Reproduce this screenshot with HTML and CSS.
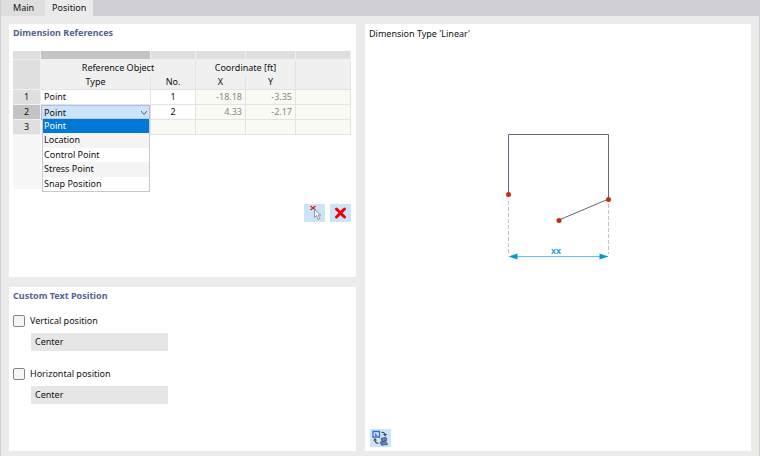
FILE: index.html
```html
<!DOCTYPE html>
<html lang="en">
<head>
<meta charset="utf-8">
<title>Dimension</title>
<link rel="stylesheet" href="styles.css">
</head>
<body>
<div class="window">
  <nav class="tabs" role="tablist">
    <button class="tab" role="tab" aria-selected="false">Main</button>
    <button class="tab tab-active" role="tab" aria-selected="true">Position</button>
  </nav>
  <main class="content">
    <div class="left">
      <section class="panel references">
        <h2 class="title">Dimension References</h2>
        <table class="grid">
          <colgroup><col class="c-row"><col class="c-type"><col class="c-no"><col class="c-xy"><col class="c-xy"><col class="c-rest"></colgroup>
          <thead>
            <tr class="strip"><td></td><td class="strip-active"></td><td></td><td></td><td></td><td></td></tr>
            <tr><th rowspan="2" class="rownum"></th><th colspan="2" class="group">Reference Object</th><th colspan="2" class="group">Coordinate [ft]</th><th class="group"></th></tr>
            <tr class="sub"><th>Type</th><th>No.</th><th>X</th><th>Y</th><th></th></tr>
          </thead>
          <tbody>
            <tr><th class="rownum">1</th><td class="type">Point</td><td class="no">1</td><td class="num">-18.18</td><td class="num">-3.35</td><td class="locked"></td></tr>
            <tr><th class="rownum rownum-active">2</th>
              <td class="editing">
                <div class="combo">
                  <select class="combo-field" aria-label="Type of reference object 2"><option>Point</option><option>Location</option><option>Control Point</option><option>Stress Point</option><option>Snap Position</option></select>
                  <svg class="chevron" viewBox="0 0 8 6"><path d="M1 1 4 4.500 7 1"/></svg>
                  <ul class="menu" role="listbox" aria-label="Type">
                    <li role="option" aria-selected="true" class="chosen">Point</li>
                    <li role="option">Location</li>
                    <li role="option">Control Point</li>
                    <li role="option">Stress Point</li>
                    <li role="option">Snap Position</li>
                  </ul>
                </div>
              </td>
              <td class="no">2</td><td class="num">4.33</td><td class="num">-2.17</td><td class="locked"></td></tr>
            <tr><th class="rownum">3</th><td class="locked"></td><td class="locked"></td><td class="locked"></td><td class="locked"></td><td class="locked"></td></tr>
            <tr class="filler"><td class="gutter"></td><td colspan="5"></td></tr>
          </tbody>
        </table>
        <div class="actions">
          <button class="tool" aria-label="Pick in view">
            <svg viewBox="0 0 21 18"><path d="M6.500 2l5 4M11.500 2l-5 4" stroke="#e3182d" stroke-width="1.300"/><path d="M10.500 5.500v8l2-2 1.500 4 1.800-.8-1.600-3.700h2.600z" fill="#fff" stroke="#858b92" stroke-width=".9"/></svg>
          </button>
          <button class="tool" aria-label="Delete">
            <svg viewBox="0 0 21 18"><path d="M6.500 5l8 8M14.500 5l-8 8" stroke="#f00000" stroke-width="3" stroke-linecap="round"/></svg>
          </button>
        </div>
      </section>
      <section class="panel text-position">
        <h2 class="title">Custom Text Position</h2>
        <div class="option">
          <label class="check"><input type="checkbox">Vertical position</label>
          <select class="field" disabled aria-label="Vertical position value"><option>Center</option></select>
        </div>
        <div class="option">
          <label class="check"><input type="checkbox">Horizontal position</label>
          <select class="field" disabled aria-label="Horizontal position value"><option>Center</option></select>
        </div>
      </section>
    </div>
    <section class="panel preview">
      <h2 class="caption">Dimension Type 'Linear'</h2>
      <svg class="drawing" viewBox="0 2 386 386" role="img" aria-label="Linear dimension">
        <g fill="none">
          <path d="M143.500 153V94.500h100v64.500L194 180" stroke="#66647f"/>
          <path d="M143.500 161v53M243.500 164v50" stroke="#c2c2c2" stroke-dasharray="4 2"/>
          <path d="M145 216.500h97" stroke="#62c1ed"/>
        </g>
        <path d="M143.500 216.500l9-3v6zM243.500 216.500l-9-3v6z" fill="#0797df"/>
        <g fill="#cc2b0a"><circle cx="143.500" cy="154.500" r="2.500"/><circle cx="243.500" cy="159.500" r="2.500"/><circle cx="194" cy="180.500" r="2.500"/></g>
        <text x="191" y="214" text-anchor="middle">xx</text>
      </svg>
      <div class="preview-bar">
        <button class="tool" aria-label="Switch picture">
          <svg viewBox="0 0 21 18"><path d="M3 2.500h6.500v5.500H3z" fill="#d9e8ff" stroke="#3568e0" stroke-width="1.300"/><path d="M5 6.800V4l2.800 2.800z" fill="#3568e0"/><path d="M11 9.500l5-1.200 1 3-5 1.200zM10 13l6-.5 1.500 3-6 .7z" fill="#6683bd" stroke="#34466e" stroke-width=".7"/><path d="M11.500 3.500q3.500-.5 3.700 2.500M8.500 14.500q-3.700-.5-3.700-4" fill="none" stroke="#4a4d50" stroke-width="1.200"/><path d="M13 5h4.200l-2 2.600zM3 11.500h4L5 9z" fill="#4a4d50"/></svg>
        </button>
      </div>
    </section>
  </main>
</div>
</body>
</html>
```
FILE: styles.css
```css
* {
  box-sizing: border-box;
}

body {
  margin: 0;
  font: 9px/14px "Noto Sans", "Open Sans", sans-serif;
  color: #111;
}

button,
select,
input {
  margin: 0;
  padding: 0;
  border: 0;
  border-radius: 0;
  font: inherit;
  color: inherit;
  appearance: none;
}

h2 {
  margin: 0;
  font: inherit;
}

.window {
  display: flex;
  flex-direction: column;
  min-height: 100vh;
  background: #ebebeb;
  border: solid #d0cfd6;
  border-width: 0 1px;
}

.tabs {
  display: flex;
  background: #d0cfd6;
}

.tab {
  height: 16px;
  padding: 0 11px 0 12px;
  background: #dedede;
}

.tab-active {
  padding: 0 7px;
  background: #ebebeb;
}

.content {
  flex: 1;
  display: grid;
  grid-template-columns: 347fr 386fr;
  gap: 9px;
  padding: 8px 8px 5px;
}

.left {
  display: grid;
  grid-template-rows: 253fr 164fr;
  gap: 10px;
}

.panel {
  background: #fff;
  padding: 2px 5px 4px 4px;
}

.title {
  font-weight: 700;
  color: #53648f;
}

.grid {
  width: 100%;
  margin-top: 11px;
  table-layout: fixed;
  border-collapse: separate;
  border-spacing: 0;
}

.c-row { width: 28px; }
.c-type { width: 110px; }
.c-no { width: 45px; }
.c-xy { width: 50px; }

.grid th,
.grid td {
  height: 15px;
  padding: 0;
  font-weight: 400;
  line-height: 14px;
  border: solid #e3e3e3;
  border-width: 0 1px 1px 0;
}

.grid thead th {
  background: #f0f0f0;
}

.grid .strip td {
  height: 9px;
  background: #dfdfdf;
  border-color: #efefef;
}

.grid .strip .strip-active {
  background: #c4c4c4;
}

.grid thead .group {
  border-bottom: 0;
}

.grid th.rownum,
.grid thead th.rownum {
  background: #dfdfdf;
  border-color: #f0f0f0;
}

.grid th.rownum-active {
  background: #c4c4c4;
}

.grid .type {
  padding-left: 3px;
}

.grid .no {
  text-align: center;
}

.grid .num {
  padding-right: 3px;
  text-align: right;
  color: #858585;
  background: #fafaf5;
}

.grid .locked {
  background: #fafaf5;
}

.grid .filler td {
  height: 54px;
  border: 0;
}

.grid .gutter {
  background: #f7f7f7;
}

.combo {
  position: relative;
  height: 14px;
}

.combo-field {
  display: block;
  width: 100%;
  height: 15px;
  padding-left: 2px;
  line-height: 13px;
  background: #cce4f7;
  border: 1px solid #b5b8e8;
}

.chevron {
  position: absolute;
  right: 2px;
  top: 5px;
  width: 8px;
  height: 6px;
  fill: none;
  stroke: #59636d;
}

.menu {
  position: absolute;
  z-index: 1;
  left: 1px;
  right: 0;
  top: 13px;
  height: 74px;
  margin: 0;
  padding: 0;
  display: grid;
  grid-template-rows: repeat(5, 1fr);
  list-style: none;
  background: #fff;
  border: 1px solid #c8c8c8;
}

.menu li {
  padding-left: 1px;
}

.menu li:nth-child(even) {
  background: #f4f4f4;
}

.menu .chosen {
  color: #fff;
  background: #0078d7;
}

.actions {
  display: flex;
  justify-content: flex-end;
  gap: 5px;
  margin-top: 15px;
}

.tool {
  width: 21px;
  height: 18px;
  background: #cce4f7;
}

.tool svg {
  display: block;
  width: 21px;
  height: 18px;
  fill: none;
}

.option {
  display: flex;
  flex-direction: column;
  align-items: flex-start;
  gap: 5px;
  margin-top: 11px;
}

.option + .option {
  margin-top: 16px;
}

.check {
  display: flex;
  align-items: center;
  gap: 5px;
}

.check input {
  width: 12px;
  height: 12px;
  background: #f5f5f5;
  border: 1px solid #858585;
  border-radius: 2px;
}

.field {
  width: 137px;
  height: 18px;
  margin-left: 18px;
  padding-left: 4px;
  color: #111;
  background: #e6e6e6;
  opacity: 1;
}

.preview {
  display: flex;
  flex-direction: column;
}

.caption {
  padding-top: 1px;
}

.drawing {
  flex: 1;
  min-height: 0;
  margin: 0 -5px 0 -4px;
}

.drawing text {
  font-size: 9px;
  font-weight: 600;
  fill: #0797df;
}

.preview-bar {
  display: flex;
  padding-left: 1px;
}
```
